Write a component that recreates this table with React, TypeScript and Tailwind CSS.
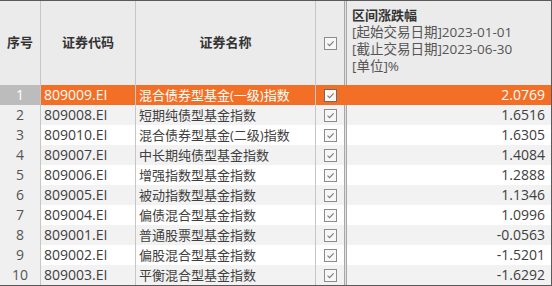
import React from "react";

const rows = [
  { no: 1, code: "809009.EI", name: "混合债券型基金(一级)指数", value: "2.0769" },
  { no: 2, code: "809008.EI", name: "短期纯债型基金指数", value: "1.6516" },
  { no: 3, code: "809010.EI", name: "混合债券型基金(二级)指数", value: "1.6305" },
  { no: 4, code: "809007.EI", name: "中长期纯债型基金指数", value: "1.4084" },
  { no: 5, code: "809006.EI", name: "增强指数型基金指数", value: "1.2888" },
  { no: 6, code: "809005.EI", name: "被动指数型基金指数", value: "1.1346" },
  { no: 7, code: "809004.EI", name: "偏债混合型基金指数", value: "1.0996" },
  { no: 8, code: "809001.EI", name: "普通股票型基金指数", value: "-0.0563" },
  { no: 9, code: "809002.EI", name: "偏股混合型基金指数", value: "-1.5201" },
  { no: 10, code: "809003.EI", name: "平衡混合型基金指数", value: "-1.6292" },
];

const font = "font-['Open_Sans','Noto_Sans_CJK_SC',sans-serif]";

function Check({ active }: { active?: boolean }) {
  return (
    <span
      className={`flex h-[13px] w-[13px] items-center justify-center border ${
        active ? "border-[#6a6a6a] bg-[#fff6f0]" : "border-[#8c8c8c] bg-[#f7f7f7]"
      }`}
    >
      <svg width="9" height="9" viewBox="0 0 9 9" fill="none">
        <path d="M1.5 4.6 L3.6 6.7 L7.6 2.3" stroke="#7a7a7a" strokeWidth="1.1" />
      </svg>
    </span>
  );
}

export default function App() {
  return (
    <div className={`${font} h-[286px] w-[552px] overflow-hidden border-t border-r border-b border-[#5a5a5a] bg-white text-[13px] text-[#404040]`}>
      {/* header */}
      <div className="flex h-[84px] bg-[#ebebeb] font-bold text-[#333]">
        <div className="flex w-[41px] items-center justify-center border-r border-[#c6c6c6]">序号</div>
        <div className="flex w-[95px] items-center justify-center border-r border-[#c6c6c6]">证券代码</div>
        <div className="flex w-[180px] items-center justify-center border-r border-[#c6c6c6]">证券名称</div>
        <div className="flex w-[28px] items-center justify-center pt-[1px]">
          <Check />
        </div>
        <div className="w-[3px] border-x border-[#a8a8a8] bg-[#e0e0e0]" />
        <div className="flex flex-1 flex-col pl-[5px] pt-[6px] text-[13.5px] leading-[17px]">
          <span className="font-bold text-[13px]">区间涨跌幅</span>
          <span className="font-normal text-[#555]">[起始交易日期]2023-01-01</span>
          <span className="font-normal text-[#555]">[截止交易日期]2023-06-30</span>
          <span className="font-normal text-[#555]">[单位]%</span>
        </div>
      </div>

      {/* rows */}
      {rows.map((r, i) => {
        const sel = i === 0;
        const odd = i % 2 === 1;
        const rowBg = sel ? "bg-[#f36f26] text-white" : odd ? "bg-[#f2f2f2]" : "bg-white";
        return (
          <div key={r.no} className={`flex h-[20px] leading-[20px] ${rowBg}`}>
            <div
              className={`w-[41px] border-r border-[#c6c6c6] text-center text-[14px] ${
                sel ? "bg-[#bcbcbc] text-white" : "bg-[#f0f0f0] text-[#555]"
              }`}
            >
              {r.no}
            </div>
            <div className="w-[95px] border-r border-[#c6c6c6] pl-[3px] text-[14px]">{r.code}</div>
            <div className="w-[180px] border-r border-[#c6c6c6] pl-[3px]">{r.name}</div>
            <div className="flex w-[28px] items-center justify-center">
              <Check active={sel} />
            </div>
            <div className={`w-[3px] border-x ${sel ? "border-[#f36f26] bg-[#f36f26]" : "border-[#a8a8a8] bg-[#e0e0e0]"}`} />
            <div className="flex-1 pr-[6px] text-right text-[14px]">{r.value}</div>
          </div>
        );
      })}
    </div>
  );
}
